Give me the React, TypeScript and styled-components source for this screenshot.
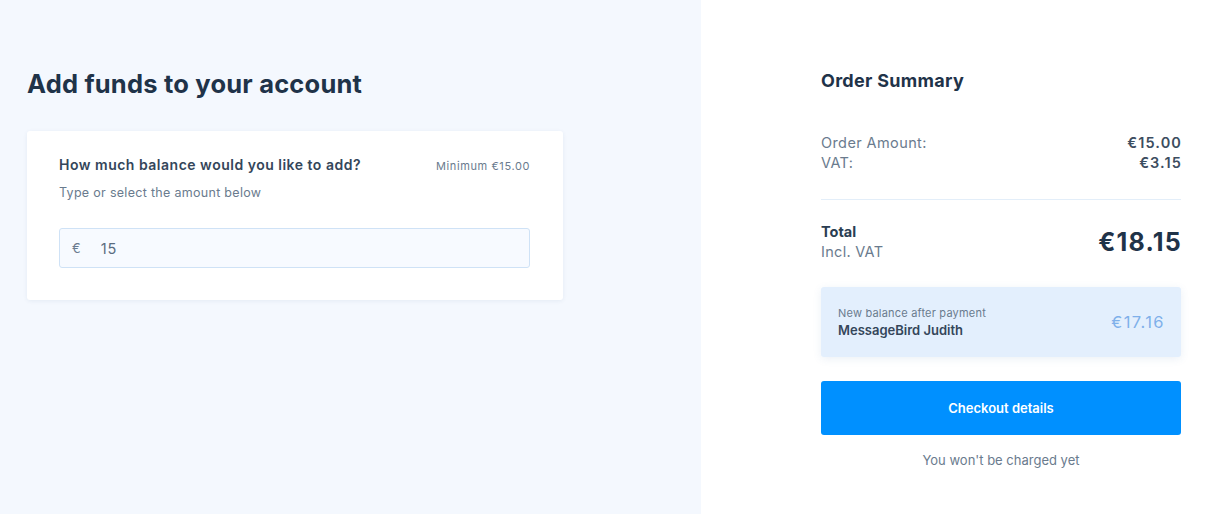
import React from "react";
import styled, { createGlobalStyle } from "styled-components";

const GlobalStyle = createGlobalStyle`
  html, body {
    margin: 0;
    padding: 0;
    height: 100%;
  }
  body {
    font-family: Inter, "Noto Sans", sans-serif;
    color: #243a52;
    -webkit-font-smoothing: antialiased;
  }
  #root {
    height: 100%;
  }
`;

const Page = styled.div`
  display: flex;
  width: 1222px;
  height: 514px;
  overflow: hidden;
`;

const FundsPanel = styled.div`
  width: 701px;
  background: #f4f8fe;
  padding: 68px 0 0 27px;
  box-sizing: border-box;
`;

const Heading = styled.h1`
  margin: 0 0 31px;
  font-size: 25.5px;
  line-height: 32px;
  font-weight: 700;
  letter-spacing: 0.2px;
  color: #1f3349;
`;

const Card = styled.div`
  width: 536px;
  box-sizing: border-box;
  background: #fff;
  border-radius: 3px;
  box-shadow: 0 1px 4px rgba(40, 80, 130, 0.08);
  padding: 24px 33px 32px 32px;
`;

const CardHeader = styled.div`
  display: flex;
  justify-content: space-between;
  align-items: baseline;
`;

const Question = styled.div`
  font-size: 14px;
  font-weight: 600;
  line-height: 20px;
  letter-spacing: 0.5px;
  color: #34465a;
`;

const Minimum = styled.div`
  font-size: 11px;
  letter-spacing: 0.6px;
  color: #6a7b8e;
`;

const Hint = styled.div`
  margin-top: 9px;
  font-size: 12.5px;
  line-height: 18px;
  letter-spacing: 0.3px;
  color: #6a7b8e;
`;

const AmountField = styled.label`
  margin-top: 26px;
  display: flex;
  align-items: center;
  height: 40px;
  box-sizing: border-box;
  border: 1px solid #cfe2f6;
  border-radius: 3px;
  background: #f7faff;
  padding: 0 12px;
  gap: 20px;
`;

const Currency = styled.span`
  font-size: 13px;
  color: #6a7b8e;
`;

const AmountInput = styled.input`
  flex: 1;
  border: none;
  outline: none;
  background: transparent;
  font-family: inherit;
  font-size: 14.5px;
  letter-spacing: 1px;
  color: #5a6c80;
  padding: 0;
`;

const SummaryPanel = styled.div`
  flex: 1;
  background: #fff;
  padding: 69px 0 0 120px;
  box-sizing: border-box;
`;

const SummaryBody = styled.div`
  width: 360px;
  display: flex;
  flex-direction: column;
`;

const SummaryTitle = styled.h2`
  margin: 0;
  font-size: 18px;
  line-height: 24px;
  font-weight: 700;
  letter-spacing: 0.3px;
  color: #1f3349;
`;

const Lines = styled.div`
  margin-top: 40px;
  padding-bottom: 26px;
  border-bottom: 1px solid #e3eef9;
`;

const Line = styled.div`
  display: flex;
  justify-content: space-between;
  font-size: 14.5px;
  line-height: 20px;
`;

const LineLabel = styled.span`
  letter-spacing: 0.4px;
  color: #6a7b8e;
`;

const LineValue = styled.span`
  color: #3c4d60;
  font-weight: 600;
  letter-spacing: 1.1px;
  margin-right: -1px;
`;

const TotalRow = styled.div`
  margin-top: 22px;
  display: flex;
  justify-content: space-between;
  align-items: center;
`;

const TotalLabels = styled.div`
  display: flex;
  flex-direction: column;
  font-size: 14.5px;
  line-height: 20px;
`;

const TotalName = styled.span`
  font-weight: 700;
  color: #2a3d52;
`;

const TotalNote = styled.span`
  letter-spacing: 0.3px;
  color: #6a7b8e;
`;

const TotalAmount = styled.span`
  font-size: 25px;
  font-weight: 700;
  letter-spacing: 1.2px;
  margin-right: -1px;
  color: #1f3349;
`;

const BalanceBox = styled.div`
  margin-top: 25px;
  height: 70px;
  box-sizing: border-box;
  background: #e3effd;
  border-radius: 3px;
  box-shadow: 0 2px 8px rgba(60, 110, 170, 0.1);
  display: flex;
  align-items: center;
  justify-content: space-between;
  padding: 0 17px;
`;

const BalanceText = styled.div`
  display: flex;
  flex-direction: column;
`;

const BalanceCaption = styled.span`
  font-size: 11px;
  line-height: 16px;
  letter-spacing: 0.2px;
  color: #6a7b8e;
`;

const BalanceOwner = styled.span`
  font-size: 13px;
  line-height: 18px;
  font-weight: 600;
  color: #34465a;
`;

const BalanceAmount = styled.span`
  font-size: 16.5px;
  letter-spacing: 1.4px;
  margin-right: -1px;
  color: #7fb0ea;
`;

const CheckoutButton = styled.button`
  margin-top: 24px;
  height: 54px;
  border: none;
  border-radius: 3px;
  background: #0090ff;
  color: #fff;
  font-family: inherit;
  font-size: 13px;
  font-weight: 600;
  cursor: pointer;
`;

const Disclaimer = styled.div`
  margin-top: 17px;
  text-align: center;
  font-size: 13px;
  color: #6a7b8e;
`;

const App = () => {
  return (
    <>
      <GlobalStyle />
      <Page>
        <FundsPanel>
          <Heading>Add funds to your account</Heading>
          <Card>
            <CardHeader>
              <Question>How much balance would you like to add?</Question>
              <Minimum>Minimum €15.00</Minimum>
            </CardHeader>
            <Hint>Type or select the amount below</Hint>
            <AmountField>
              <Currency>€</Currency>
              <AmountInput defaultValue="15" />
            </AmountField>
          </Card>
        </FundsPanel>

        <SummaryPanel>
          <SummaryBody>
            <SummaryTitle>Order Summary</SummaryTitle>
            <Lines>
              <Line>
                <LineLabel>Order Amount:</LineLabel>
                <LineValue>€15.00</LineValue>
              </Line>
              <Line>
                <LineLabel>VAT:</LineLabel>
                <LineValue>€3.15</LineValue>
              </Line>
            </Lines>
            <TotalRow>
              <TotalLabels>
                <TotalName>Total</TotalName>
                <TotalNote>Incl. VAT</TotalNote>
              </TotalLabels>
              <TotalAmount>€18.15</TotalAmount>
            </TotalRow>
            <BalanceBox>
              <BalanceText>
                <BalanceCaption>New balance after payment</BalanceCaption>
                <BalanceOwner>MessageBird Judith</BalanceOwner>
              </BalanceText>
              <BalanceAmount>€17.16</BalanceAmount>
            </BalanceBox>
            <CheckoutButton>Checkout details</CheckoutButton>
            <Disclaimer>You won't be charged yet</Disclaimer>
          </SummaryBody>
        </SummaryPanel>
      </Page>
    </>
  );
};

export default App;
